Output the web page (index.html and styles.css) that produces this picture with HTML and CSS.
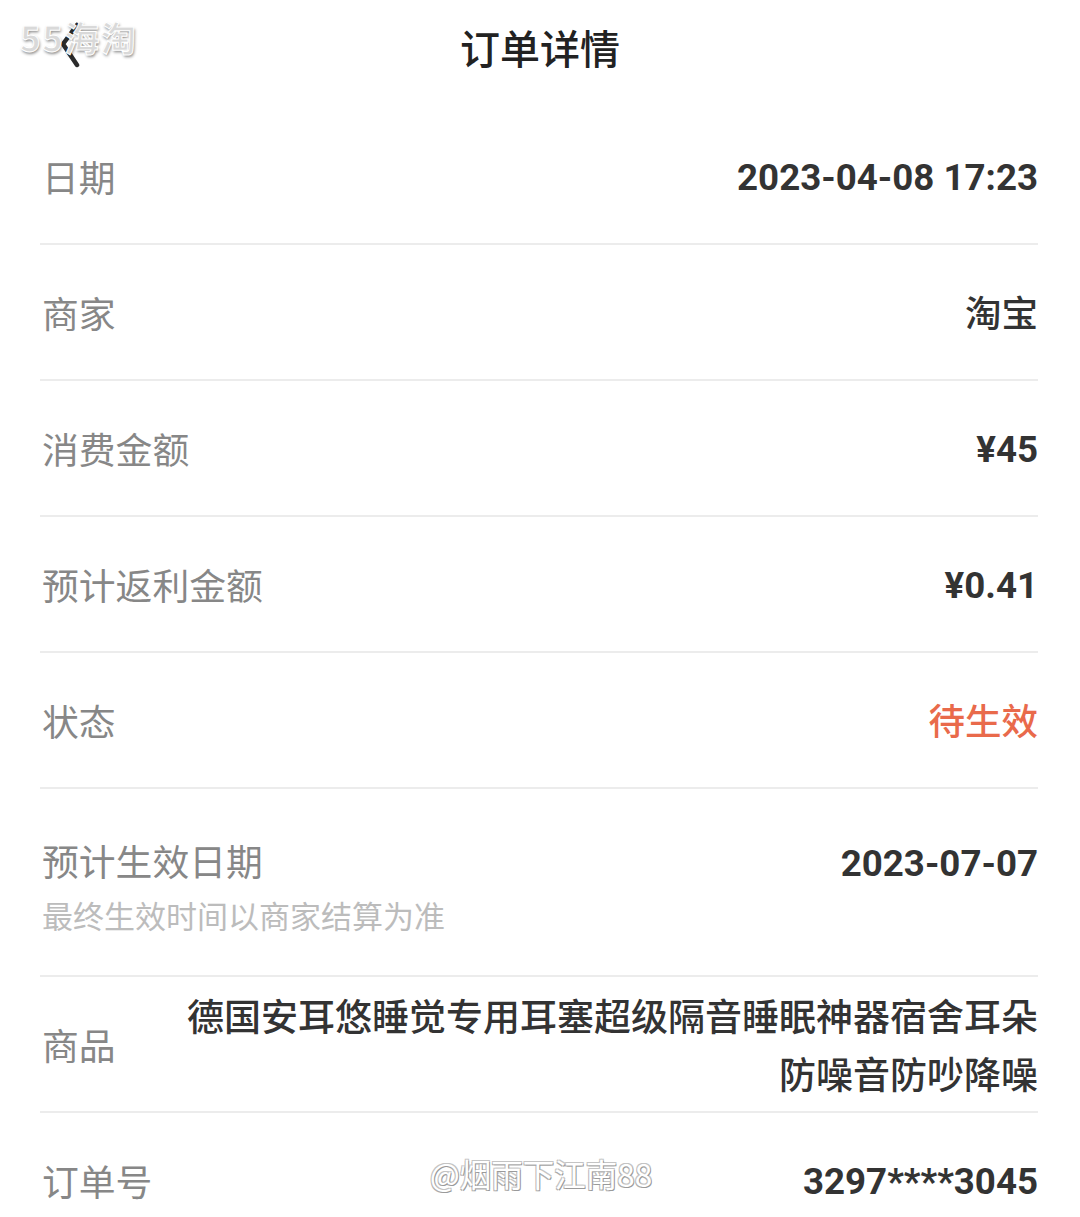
FILE: index.html
```html
<!DOCTYPE html>
<html lang="zh-CN">
<head>
  <meta charset="UTF-8">
  <meta name="viewport" content="width=device-width, initial-scale=1.0">
  <title>订单详情</title>
  <link rel="stylesheet" href="styles.css">
</head>
<body>
  <div class="page">
    <header class="topbar">
      <button class="back-btn" aria-label="返回">
        <svg width="28" height="46" viewBox="0 0 28 46">
          <polyline points="21,3 7,22 21,43" fill="none" stroke="#2b2b2b" stroke-width="4.5" stroke-linecap="round" stroke-linejoin="round"/>
        </svg>
      </button>
      <h1 class="title">订单详情</h1>
      <span class="site-mark">55海淘</span>
    </header>

    <ul class="detail-list">
      <li class="detail-row">
        <span class="label">日期</span>
        <span class="value num">2023-04-08 17:23</span>
      </li>
      <li class="detail-row">
        <span class="label">商家</span>
        <span class="value">淘宝</span>
      </li>
      <li class="detail-row">
        <span class="label">消费金额</span>
        <span class="value num">¥45</span>
      </li>
      <li class="detail-row">
        <span class="label">预计返利金额</span>
        <span class="value num">¥0.41</span>
      </li>
      <li class="detail-row">
        <span class="label">状态</span>
        <span class="value status">待生效</span>
      </li>
      <li class="detail-row detail-row--tall">
        <div class="label-group">
          <span class="label">预计生效日期</span>
          <span class="hint">最终生效时间以商家结算为准</span>
        </div>
        <span class="value num">2023-07-07</span>
      </li>
      <li class="detail-row">
        <span class="label">商品</span>
        <span class="value goods">德国安耳悠睡觉专用耳塞超级隔音睡眠神器宿舍耳朵防噪音防吵降噪</span>
      </li>
      <li class="detail-row">
        <span class="label">订单号</span>
        <span class="value num">3297****3045</span>
        <span class="weibo-mark">@烟雨下江南88</span>
      </li>
    </ul>
  </div>
</body>
</html>
```

FILE: styles.css
```css
  body {
    margin: 0;
    background-color: #ffffff;
    font-family: "Noto Sans CJK SC", "Noto Sans", sans-serif;
    color: #333333;
  }

  .page {
    width: 1080px;
    height: 1217px;
    overflow: hidden;
  }

  .topbar {
    position: relative;
    height: 94px;
    display: flex;
    justify-content: center;
    align-items: center;
  }

  .back-btn {
    position: absolute;
    left: 56px;
    top: 22px;
    padding: 0;
    border: none;
    background: transparent;
    display: flex;
  }

  .title {
    margin: 0;
    font-size: 40px;
    font-weight: 500;
    line-height: 94px;
    color: #222222;
  }

  /* screenshot watermark, sits over the back arrow */
  .site-mark {
    position: absolute;
    left: 20px;
    top: 15px;
    font-family: "Noto Sans CJK SC", sans-serif;
    font-size: 35px;
    font-weight: 700;
    line-height: 44px;
    letter-spacing: 1.5px;
    color: #d9d9d9;
    -webkit-text-stroke: 1px #ffffff;
    text-shadow: 1px 2px 3px rgba(0, 0, 0, 0.45);
  }

  .detail-list {
    list-style: none;
    margin: 15px 42px 0 40px;
    padding: 0;
  }

  .detail-row {
    position: relative;
    box-sizing: border-box;
    height: 136px;
    display: flex;
    justify-content: space-between;
    align-items: center;
    padding-left: 2px;
    border-bottom: 2px solid #ececec;
  }

  .detail-row--tall {
    height: 188px;
    align-items: flex-start;
    padding-top: 46px;
  }

  .label-group {
    display: flex;
    flex-direction: column;
  }

  .label {
    font-size: 36.8px;
    line-height: 50px;
    color: #878787;
    white-space: nowrap;
  }

  .hint {
    margin-top: 10px;
    font-size: 31px;
    line-height: 40px;
    color: #bcbcbc;
  }

  .value {
    font-size: 36.5px;
    font-weight: 500;
    line-height: 50px;
    color: #333333;
    text-align: right;
  }

  .value.num {
    font-family: Roboto, "Noto Sans CJK SC", sans-serif;
    font-size: 36.7px;
    font-weight: 700;
    padding-top: 4px;
  }

  .value.status {
    color: #e96a4b;
  }

  .value.goods {
    flex: 0 0 860px;
    font-size: 37px;
    line-height: 58px;
  }

  .weibo-mark {
    position: absolute;
    left: 390px;
    top: 42px;
    font-size: 31.5px;
    line-height: 36px;
    color: #ffffff;
    text-shadow: 1px 1px 0 #9a9a9a, -1px -1px 0 #c4c4c4, 1px -1px 0 #c4c4c4, -1px 1px 0 #b0b0b0;
  }
```
